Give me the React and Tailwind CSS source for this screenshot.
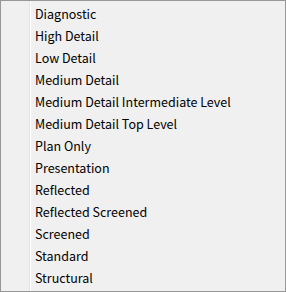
import React from 'react';

const items = [
  'Diagnostic',
  'High Detail',
  'Low Detail',
  'Medium Detail',
  'Medium Detail Intermediate Level',
  'Medium Detail Top Level',
  'Plan Only',
  'Presentation',
  'Reflected',
  'Reflected Screened',
  'Screened',
  'Standard',
  'Structural',
];

export default function App() {
  return (
    <div className="w-[286px] h-[292px] bg-[#f0f0f0] border border-[#979797] flex">
      {/* icon gutter + separator */}
      <div className="w-[28px] shrink-0" />
      <div className="w-px bg-[#e2e3e3] shrink-0" />
      <div className="w-px bg-white shrink-0" />
      <ul className="flex-1 flex flex-col py-[2px] text-[12.5px] text-black font-['Noto_Sans_CJK_SC','Noto_Sans',sans-serif]">
        {items.map((it) => (
          <li key={it} className="h-[22px] flex items-center pl-[4px] leading-none">
            {it}
          </li>
        ))}
      </ul>
    </div>
  );
}
